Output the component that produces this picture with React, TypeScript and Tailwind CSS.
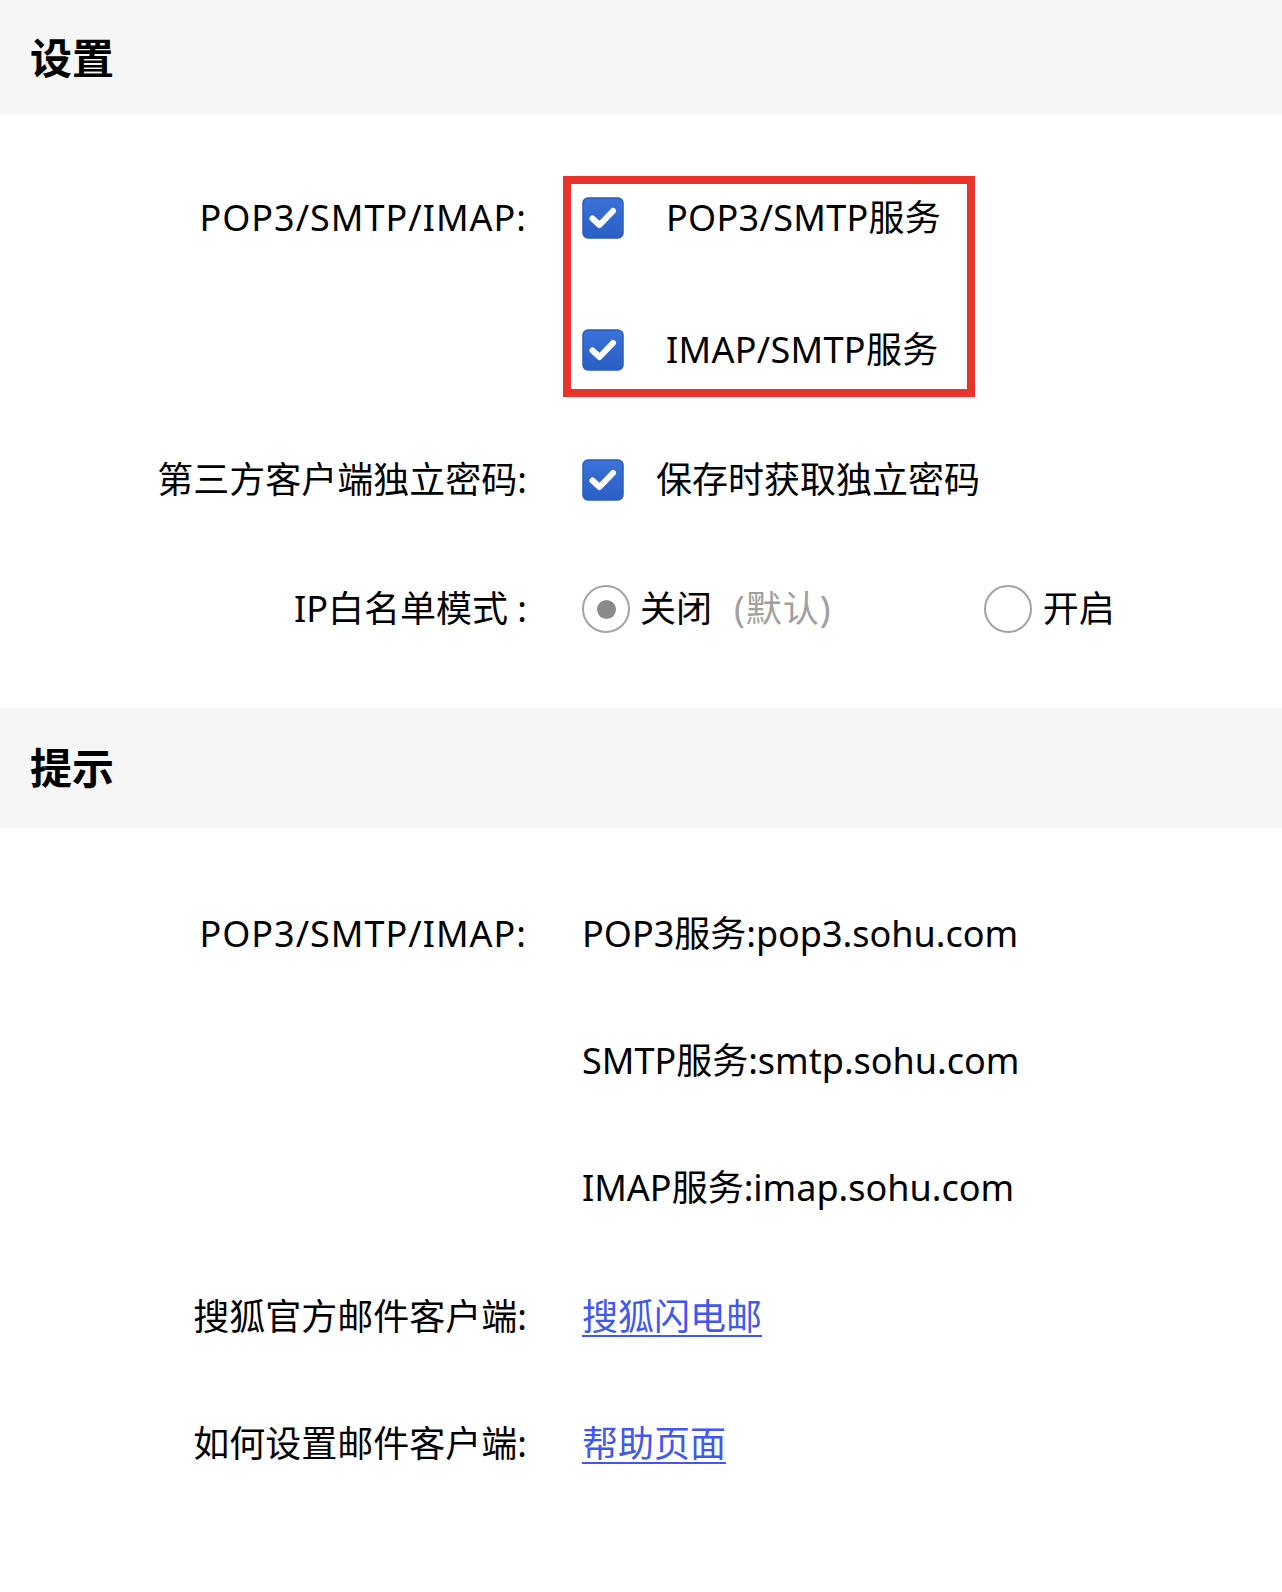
import React from "react";

function CheckBox() {
  return (
    <svg width="42" height="42" viewBox="0 0 42 42" className="shrink-0">
      <defs>
        <linearGradient id="cbfill" x1="0" y1="0" x2="0" y2="1">
          <stop offset="0" stopColor="#3a73d8" />
          <stop offset="1" stopColor="#2a5fc4" />
        </linearGradient>
      </defs>
      <rect x="1" y="1" width="40" height="40" rx="5" fill="url(#cbfill)" stroke="#2b5cc0" strokeWidth="1.5" />
      <path d="M10.5 21.5 L17.5 28 L31 14" fill="none" stroke="#ffffff" strokeWidth="6" strokeLinecap="round" strokeLinejoin="round" />
    </svg>
  );
}

function Radio({ checked }: { checked?: boolean }) {
  return (
    <span className="flex h-[48px] w-[48px] shrink-0 items-center justify-center rounded-full border-2 border-[#a3a3a3] bg-white">
      {checked && <span className="h-[19px] w-[19px] rounded-full bg-[#8a8a8a]" />}
    </span>
  );
}

function Header({ title, h }: { title: string; h: string }) {
  return (
    <div className={`flex items-center bg-[#f6f6f6] pl-[30px] ${h}`}>
      <h2 className="text-[42px] font-bold leading-none text-black">{title}</h2>
    </div>
  );
}

function Row({ label, wide, children }: { label: string; wide?: boolean; children?: React.ReactNode }) {
  return (
    <div className="flex h-[68px] items-center">
      <div className={`w-[527px] shrink-0 whitespace-nowrap text-right ${wide ? "tracking-[1px]" : ""}`}>{label}</div>
      <div className="ml-[55px] flex items-center whitespace-nowrap">{children}</div>
    </div>
  );
}

export default function App() {
  return (
    <div className="min-h-[1592px] w-[1282px] bg-white font-['Noto_Sans','Noto_Sans_CJK_SC',sans-serif] text-[36px] leading-none text-black">
      <Header title="设置" h="h-[115px]" />

      <section className="pb-[65px] pt-[61px]">
        <div className="flex">
          <div className="flex h-[84px] w-[527px] shrink-0 items-center justify-end whitespace-nowrap tracking-[1px]">POP3/SMTP/IMAP:</div>
          <div className="ml-[36px] flex w-[412px] flex-col gap-[64px] border-[8px] border-[#e8342a] pb-[5px] pl-[11px]">
            <label className="flex h-[68px] items-center whitespace-nowrap tracking-[0.3px]">
              <CheckBox />
              <span className="ml-[42px]">POP3/SMTP服务</span>
            </label>
            <label className="flex h-[68px] items-center whitespace-nowrap tracking-[0.3px]">
              <CheckBox />
              <span className="ml-[42px]">IMAP/SMTP服务</span>
            </label>
          </div>
        </div>

        <div className="mt-[49px]">
          <Row label="第三方客户端独立密码:">
            <CheckBox />
            <span className="ml-[32px]">保存时获取独立密码</span>
          </Row>
        </div>

        <div className="mt-[61px]">
          <Row label="IP白名单模式 :">
            <Radio checked />
            <span className="ml-[10px]">关闭</span>
            <span className="ml-[22px] tracking-[1px] text-[#a0a0a0]">(默认)</span>
            <span className="ml-[152px]">
              <Radio />
            </span>
            <span className="ml-[11px]">开启</span>
          </Row>
        </div>
      </section>

      <Header title="提示" h="h-[120px]" />

      <section className="flex flex-col gap-[59px] pb-[113px] pt-[72px]">
        <Row label="POP3/SMTP/IMAP:" wide>POP3服务:pop3.sohu.com</Row>
        <Row label="">SMTP服务:smtp.sohu.com</Row>
        <Row label="">IMAP服务:imap.sohu.com</Row>
        <div className="mt-[2px]">
          <Row label="搜狐官方邮件客户端:">
            <a href="#" className="text-[#3f58ee] underline decoration-[2px] underline-offset-[5px]">搜狐闪电邮</a>
          </Row>
        </div>
        <Row label="如何设置邮件客户端:">
          <a href="#" className="text-[#3f58ee] underline decoration-[2px] underline-offset-[5px]">帮助页面</a>
        </Row>
      </section>
    </div>
  );
}
